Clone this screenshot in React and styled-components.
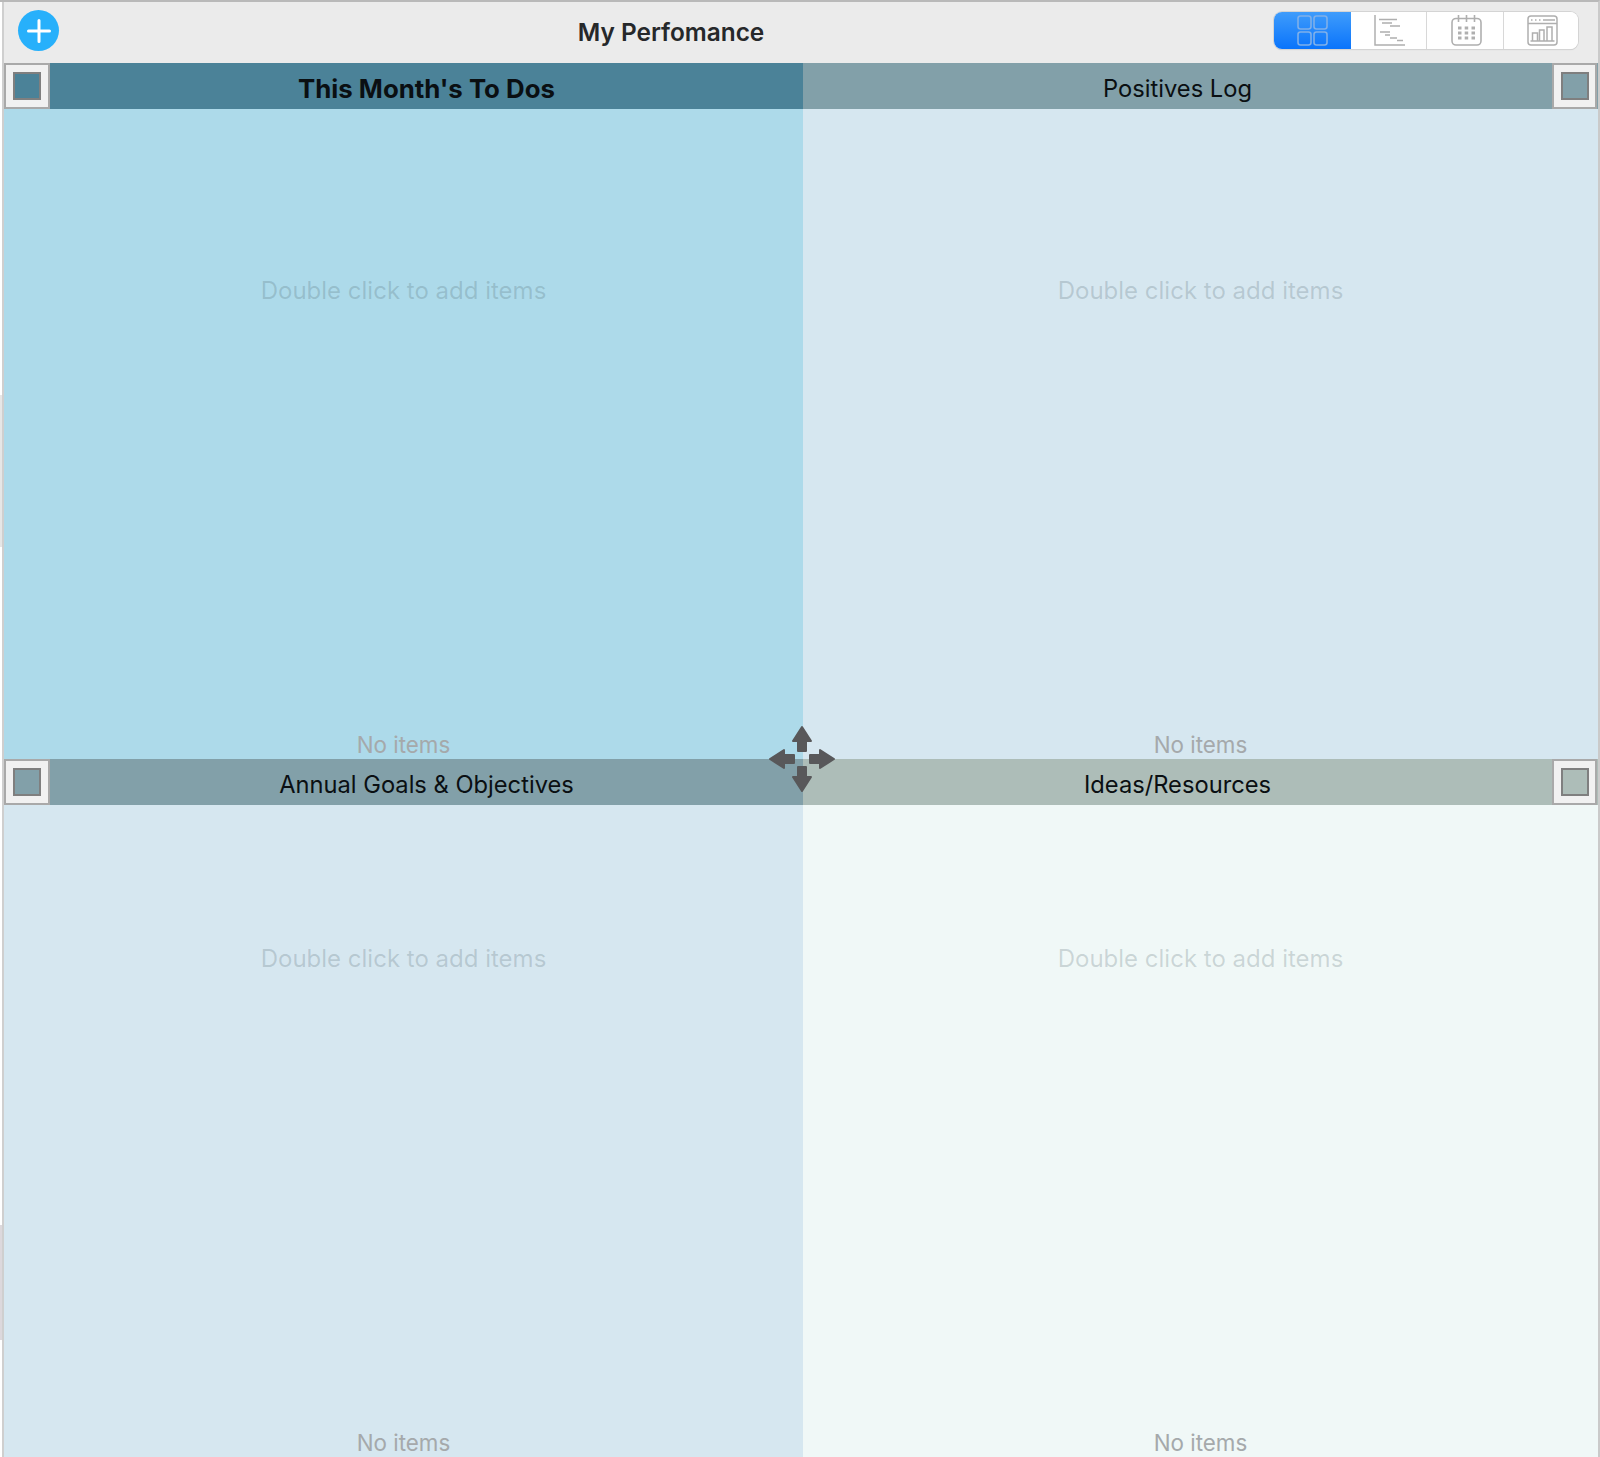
import React from 'react'
import styled, {createGlobalStyle} from 'styled-components'

const GlobalStyle = createGlobalStyle`
  html, body {
    margin: 0;
    padding: 0;
    background: #fff;
  }
  body {
    font-family: Inter, "Liberation Sans", sans-serif;
  }
`

const Window = styled.div`
  position: relative;
  width: 1600px;
  height: 1457px;
  overflow: hidden;
  box-sizing: border-box;
  padding-left: 2px;
  border-top: 2px solid #b9b9b9;
  border-right: 2px solid #cacaca;
  background: #fff;
`

const Frame = styled.div`
  height: 100%;
  border-left: 2px solid #cfcfcf;
  background: #ebebeb;
`

/* bits of the window behind, showing at the left edge */
const EdgePatch = styled.div`
  position: absolute;
  left: 0;
  width: 2px;
  top: ${props => props.$top}px;
  height: ${props => props.$height}px;
  background: ${props => props.$color};
`

const Toolbar = styled.div`
  height: 61px;
  display: grid;
  grid-template-columns: 1fr auto 1fr;
  align-items: center;
  box-sizing: border-box;
  padding: 0 20px 4px 14px;
  background: #ebebeb;
`

const AddButton = styled.button`
  width: 41px;
  height: 41px;
  padding: 0;
  border: none;
  border-radius: 50%;
  background: #27b0fb;
  display: flex;
  align-items: center;
  justify-content: center;
`

const Title = styled.div`
  font-size: 24.4px;
  font-weight: 600;
  color: #26282a;
  margin: 2px 254px 0 0;
`

const Segments = styled.div`
  justify-self: end;
  display: flex;
  height: 37px;
  width: 304px;
  border-radius: 8px;
  overflow: hidden;
  background: #fff;
  box-shadow: 0 0 0 1px #d4d4d4, 0 1px 1px #c4c4c4;
`

const Segment = styled.div`
  flex: 0 0 ${props => props.$width}px;
  display: flex;
  align-items: center;
  justify-content: center;
  box-sizing: border-box;
  padding-left: ${props => props.$active ? '0' : '2px'};
  background: ${props => props.$active ? 'linear-gradient(#3f9cfb, #0a74fb)' : '#fff'};
  border-left: ${props => props.$divider ? '1px solid #d8d8d8' : 'none'};
`

const Grid = styled.div`
  display: grid;
  grid-template-columns: 799px 795px;
  grid-template-rows: 696px 698px;
`

const Panel = styled.section`
  display: flex;
  flex-direction: column;
  background: ${props => props.$body};
  min-height: 0;
`

const PanelHeader = styled.div`
  height: 46px;
  flex: none;
  display: flex;
  flex-direction: ${props => props.$right ? 'row-reverse' : 'row'};
  padding-right: ${props => props.$right ? '1px' : '0'};
  background: ${props => props.$color};
`

const HeaderTitle = styled.div`
  flex: 1;
  text-align: center;
  padding-top: 2px;
  line-height: 47px;
  font-size: ${props => props.$bold ? '25.8px' : '23.7px'};
  font-weight: ${props => props.$bold ? 700 : 400};
  color: #0a0f12;
`

const Toggle = styled.div`
  width: ${props => props.$right ? '45px' : '46px'};
  height: 46px;
  flex: none;
  box-sizing: border-box;
  border: 2px solid #a9a9a9;
  background: #f1f1f1;
  display: flex;
  align-items: center;
  justify-content: center;
`

const ToggleBox = styled.div`
  width: 28px;
  height: 28px;
  box-sizing: border-box;
  border: 2px solid #7f7f7f;
  background: ${props => props.$color};
`

const PanelBody = styled.div`
  flex: 1;
  display: flex;
  flex-direction: column;
  align-items: center;
  padding-top: ${props => props.$offset}px;
`

const Hint = styled.div`
  font-size: 24px;
  line-height: 30px;
  color: rgba(70, 90, 100, 0.22);
`

const Footer = styled.div`
  margin-top: auto;
  font-size: 22.4px;
  line-height: 28px;
  color: #a5a9ab;
`

const MoveHandle = styled.svg`
  position: absolute;
  left: 767px;
  top: 722px;
  width: 70px;
  height: 70px;
`

const panels = [
  {title: "This Month's To Dos", body: '#addaea', head: '#4b8298', bold: true, offset: 167},
  {title: 'Positives Log', body: '#d6e7f0', head: '#82a0a9', right: true, offset: 167},
  {title: 'Annual Goals & Objectives', body: '#d6e7f0', head: '#82a0a9', offset: 139},
  {title: 'Ideas/Resources', body: '#f0f8f7', head: '#adbdb8', right: true, offset: 139},
]

const GridIcon = () => (
  <svg width="31" height="31" viewBox="0 0 31 31" fill="none" stroke="#7fb0ea" strokeWidth="1.6">
    <rect x="1" y="1" width="13" height="13" rx="2.5"/>
    <rect x="17" y="1" width="13" height="13" rx="2.5"/>
    <rect x="1" y="17" width="13" height="13" rx="2.5"/>
    <rect x="17" y="17" width="13" height="13" rx="2.5"/>
  </svg>
)

const GanttIcon = () => (
  <svg width="31" height="31" viewBox="0 0 31 31" fill="none" stroke="#afafaf">
    <path d="M1 0V30H31" strokeWidth="1.5"/>
    <path d="M5 4.5H23M8 8H18M16 11H26M6 17H16M11 20H16M16 23H23M23 25.5H29" strokeWidth="1.5"/>
  </svg>
)

const CalendarIcon = () => (
  <svg width="31" height="31" viewBox="0 0 31 31" fill="none" stroke="#afafaf" strokeWidth="1.6">
    <rect x="1" y="3.5" width="29" height="26.5" rx="4"/>
    <path d="M7.5 0V7M15.5 0V7M23.5 0V7"/>
    <path d="M7 13h3.5M13.7 13h3.5M20.5 13h3.5M7 18h3.5M13.7 18h3.5M20.5 18h3.5M7 23h3.5M13.7 23h3.5M20.5 23h3.5" strokeWidth="3"/>
  </svg>
)

const ReportIcon = () => (
  <svg width="31" height="31" viewBox="0 0 31 31" fill="none" stroke="#afafaf" strokeWidth="1.5">
    <rect x="1" y="1" width="29" height="29" rx="3"/>
    <path d="M1 8.5H30"/>
    <path d="M4 5H5.5M8 5H9.5M12 5H13.5M16 5H28" strokeWidth="1.5"/>
    <path d="M5.5 25.5V18H10.5V25.5M12.5 25.5V15H17V25.5M20 25.5V12H25V25.5M3.5 26H27.5"/>
  </svg>
)

const Panels = () => panels.map(panel => (
  <Panel key={panel.title} $body={panel.body}>
    <PanelHeader $color={panel.head} $right={panel.right}>
      <Toggle $right={panel.right}><ToggleBox $color={panel.head}/></Toggle>
      <HeaderTitle $bold={panel.bold}>{panel.title}</HeaderTitle>
    </PanelHeader>
    <PanelBody $offset={panel.offset}>
      <Hint>Double click to add items</Hint>
      <Footer>No items</Footer>
    </PanelBody>
  </Panel>
))

const App = () => (
  <Window>
    <GlobalStyle/>
    <EdgePatch $top={393} $height={152} $color="#e6e6e6"/>
    <EdgePatch $top={1223} $height={115} $color="#dcd8dc"/>
    <Frame>
      <Toolbar>
        <div>
          <AddButton aria-label="Add">
            <svg width="26" height="26" viewBox="0 0 26 26" stroke="#fff" strokeWidth="3" strokeLinecap="round">
              <path d="M13 2.5V23.5M2.5 13H23.5"/>
            </svg>
          </AddButton>
        </div>
        <Title>My Perfomance</Title>
        <Segments>
          <Segment $active $width={77}><GridIcon/></Segment>
          <Segment $width={75}><GanttIcon/></Segment>
          <Segment $divider $width={77}><CalendarIcon/></Segment>
          <Segment $divider $width={75}><ReportIcon/></Segment>
        </Segments>
      </Toolbar>
      <Grid>
        <Panels/>
      </Grid>
    </Frame>
    <MoveHandle viewBox="0 0 70 70" fill="#58585a" stroke="#58585a" strokeWidth="2" strokeLinejoin="round">
      <path d="M35 3L44 17H39V27H31V17H26Z"/>
      <path d="M35 67L44 53H39V43H31V53H26Z"/>
      <path d="M3 35L17 26V31H27V39H17V44Z"/>
      <path d="M67 35L53 26V31H43V39H53V44Z"/>
    </MoveHandle>
  </Window>
)

export default App
